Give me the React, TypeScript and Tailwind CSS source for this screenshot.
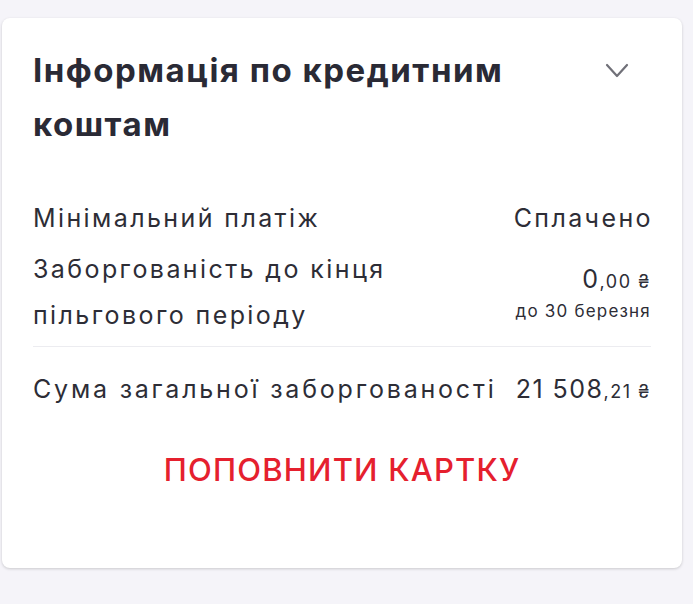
import React from 'react';

function Chevron() {
  return (
    <svg width="24" height="16" viewBox="0 0 24 16" fill="none" className="mt-[20px] mr-[22px] shrink-0">
      <polyline points="2,2 12,13 22,2" stroke="#707078" strokeWidth="2.2" strokeLinecap="round" strokeLinejoin="round" />
    </svg>
  );
}

export default function App() {
  return (
    <div className="min-h-screen w-full bg-[#f5f4f9] pt-[18px] pl-[2px] pr-[11px] font-['Inter','Noto_Sans',sans-serif]">
      <div className="bg-white rounded-[8px] shadow-[0_1px_3px_rgba(0,0,0,0.18)] h-[550px] px-[31px] pt-[25px]">
        {/* HEADER */}
        <div className="flex items-start justify-between">
          <h2 className="text-[33px] leading-[54px] font-bold tracking-[1.5px] text-[#2a2a35] max-w-[520px]">
            Інформація по кредитним коштам
          </h2>
          <Chevron />
        </div>

        {/* ROWS */}
        <div className="mt-[47px] text-[25px] tracking-[2.4px] text-[#2d2d36]">
          <div className="flex justify-between leading-[40px]">
            <span>Мінімальний платіж</span>
            <span className="mr-[-2px]">Сплачено</span>
          </div>
          <div className="flex justify-between mt-[8px] pb-[8px] border-b border-[#ececf0]">
            <div className="leading-[46px]">
              Заборгованість до кінця
              <br />
              пільгового періоду
            </div>
            <div className="text-right pt-[16px]">
              <div className="leading-[34px] tracking-[1.5px]">
                0<span className="text-[18px]">,00 ₴</span>
              </div>
              <div className="text-[17px] leading-[24px] tracking-[1.2px]">до 30 березня</div>
            </div>
          </div>
          <div className="flex justify-between leading-[40px] mt-[22px]">
            <span className="tracking-[2.8px]">Сума загальної заборгованості</span>
            <span className="tracking-[1.5px]">
              21 508<span className="text-[18px]">,21 ₴</span>
            </span>
          </div>
        </div>

        <button className="block mx-auto mt-[35px] text-[31px] font-medium tracking-[1.2px] text-[#e5202e]">
          ПОПОВНИТИ КАРТКУ
        </button>
      </div>
    </div>
  );
}
